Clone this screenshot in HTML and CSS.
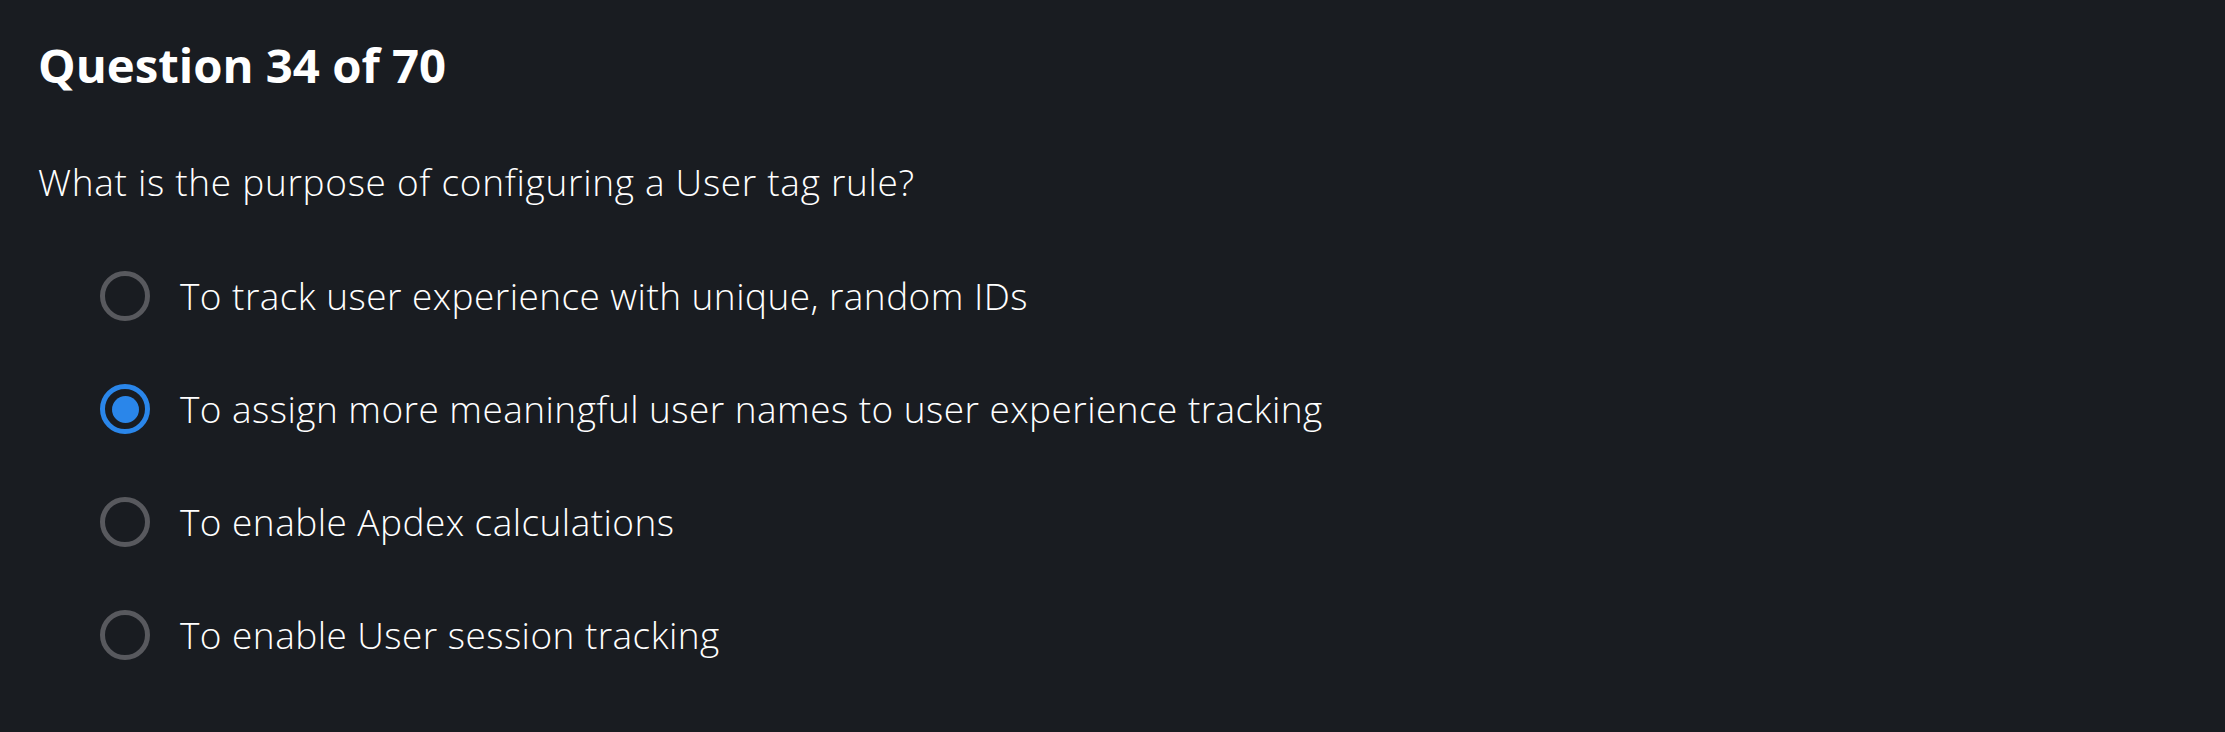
FILE: index.html
```html
<!DOCTYPE html>
<html>
<head>
<meta charset="utf-8">
<link rel="stylesheet" href="styles.css">
</head>
<body>
<main class="quiz">
  <h1 class="quiz-title">Question 34 of 70</h1>
  <p class="quiz-question">What is the purpose of configuring a User tag rule?</p>
  <ul class="options">
    <li class="option"><span class="radio"></span><span class="label">To track user experience with unique, random IDs</span></li>
    <li class="option"><span class="radio radio-checked"></span><span class="label">To assign more meaningful user names to user experience tracking</span></li>
    <li class="option"><span class="radio"></span><span class="label">To enable Apdex calculations</span></li>
    <li class="option"><span class="radio"></span><span class="label">To enable User session tracking</span></li>
  </ul>
</main>
</body>
</html>
```
FILE: styles.css
```css
html, body {
  margin: 0;
  padding: 0;
  background: #191c21;
  height: 100%;
}
body {
  font-family: "Open Sans", Lato, sans-serif;
  color: #ffffff;
}
.quiz {
  padding: 35px 38px 0;
}
.quiz-title {
  margin: 0;
  font-size: 47.3px;
  font-weight: 700;
  line-height: 60px;
}
.quiz-question {
  margin: 62px 0 0;
  font-size: 37px;
  font-weight: 300;
  letter-spacing: 0.7px;
  line-height: 50px;
}
.options {
  list-style: none;
  margin: 64px 0 0;
  padding: 0 0 0 62px;
  display: flex;
  flex-direction: column;
  gap: 63px;
}
.option {
  display: flex;
  align-items: center;
  gap: 30px;
  height: 50px;
}
.radio {
  box-sizing: border-box;
  width: 50px;
  height: 50px;
  border-radius: 50%;
  border: 5px solid #58595e;
  flex: none;
  display: flex;
  align-items: center;
  justify-content: center;
}
.radio-checked {
  border-color: #2a86ea;
}
.radio-checked::after {
  content: "";
  width: 27px;
  height: 27px;
  border-radius: 50%;
  background: #2a86ea;
}
.label {
  font-size: 37px;
  font-weight: 300;
  letter-spacing: 0.45px;
  line-height: 50px;
}
```
